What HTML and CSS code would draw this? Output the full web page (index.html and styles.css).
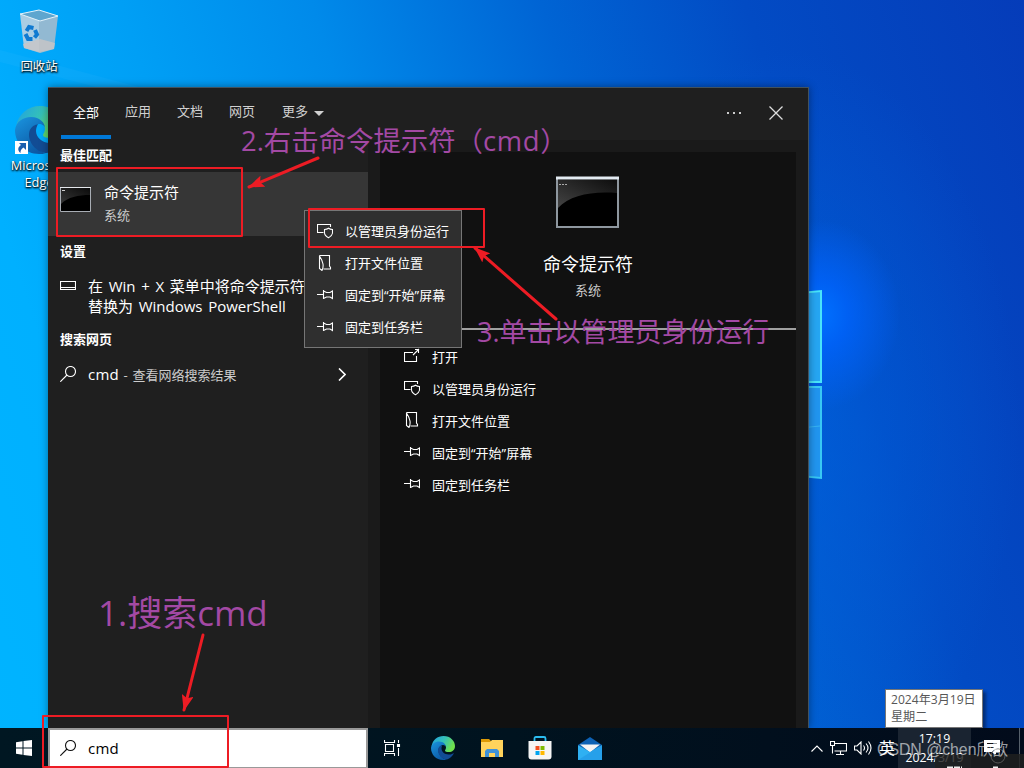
FILE: index.html
```html
<!DOCTYPE html>
<html lang="zh-CN">
<head>
  <meta charset="UTF-8">
  <title>搜索 cmd</title>
  <link rel="stylesheet" href="styles.css">
</head>
<body>
  <!-- 公用图标 -->
  <svg class="defs" width="0" height="0">
    <defs>
      <symbol id="i-shield" viewBox="0 0 16 16">
        <path d="M6.500 9.500H.5v-8h13v2.500" />
        <path d="M11.500 5.300c1.200.9 2.500 1.200 4 1.200v3.200c0 2.500-2.200 4-4 5-1.800-1-4-2.500-4-5V6.500c1.500 0 2.800-.3 4-1.200z" />
      </symbol>
      <symbol id="i-folder" viewBox="0 0 16 16">
        <path d="M2.500.5h10v10.500l1 1.500v1.500H6.500M2.500.5v13l2.500 2q1.500-3 1-6.500t-3.500-8" />
      </symbol>
      <symbol id="i-pin" viewBox="0 0 16 16">
        <path d="M0 7.500h6.500M6.500 3v9M6.500 4l3 1.500h3.500l2.500-1.500v7.500l-2.500-1.500H9.500l-3 1.500" />
      </symbol>
      <symbol id="i-open" viewBox="0 0 16 16">
        <path d="M9 4.500H.5v9h12V8M9 7l6-6M11 1.500h3.500V5" />
      </symbol>
      <symbol id="i-search" viewBox="0 0 16 16">
        <circle cx="10.500" cy="5.500" r="5" />
        <path d="M7 9L.3 15.700" />
      </symbol>
      <linearGradient id="edgeA" x1="0" y1="0" x2="1" y2=".4">
        <stop offset="0" stop-color="#1fa0e4" />
        <stop offset=".55" stop-color="#35c1b8" />
        <stop offset="1" stop-color="#6fe04c" />
      </linearGradient>
      <linearGradient id="edgeB" x1="0" y1="0" x2=".6" y2="1">
        <stop offset="0" stop-color="#1a95e0" />
        <stop offset="1" stop-color="#0c59a4" />
      </linearGradient>
      <symbol id="i-edge" viewBox="0 0 48 48">
        <path fill="url(#edgeA)" d="M1 21C3 8 13 0 25 0c14 0 23 10 23 20 0 8-6 12-12 12-5 0-8-1-8-3 0-1 2-3 2-6 0-5-5-9-12-9C10 14 4 17 1 21z" />
        <path fill="url(#edgeB)" d="M0 24c1-8 8-13 16-13 9 0 14 6 14 11 0-2-3-4-6-4-5 0-9 5-9 11 0 8 7 16 16 18-2 1-5 1-7 1C10 48 0 37 0 24z" />
        <path fill="#124c94" d="M23 18c-7 2-9 6-9 11 0 9 9 18 18 18 6-2 10-6 13-11 1-1 0-2-1-1-3 2-6 2-9 2-8 0-14-6-14-12 0-3 1-5 2-7z" />
      </symbol>
      <linearGradient id="conGloss" x1="0" y1="1" x2="1" y2="0">
        <stop offset="0" stop-color="#555" />
        <stop offset="1" stop-color="#111" />
      </linearGradient>
      <marker id="tip" viewBox="0 0 16 12" refX="15" refY="6" markerWidth="16" markerHeight="12" markerUnits="userSpaceOnUse" orient="auto">
        <path fill="#ed1c24" d="M0 0l16 6-16 6 3-6z" />
      </marker>
    </defs>
  </svg>

  <div class="desktop">
    <!-- 壁纸上的窗口标志 -->
    <svg class="wall-logo" width="40" height="210" viewBox="0 0 40 210">
      <path fill="#26a6f2" stroke="#48e4fa" stroke-width="2" d="M0 14l21-2v91H0z" />
      <path fill="#2195ef" stroke="#38c8f4" stroke-width="2" d="M0 108h21v91l-21-2z" />
      <path stroke="#37b4f3" d="M0 149l20-2" />
    </svg>
    <svg class="wall-ray" width="300" height="90" viewBox="0 0 300 90">
      <path d="M0 0l300 80v10L0 12z" fill="#fff" opacity=".03" />
    </svg>

    <!-- 桌面图标 -->
    <div class="shortcuts">
      <div class="shortcut">
        <svg width="40" height="44" viewBox="0 0 40 44">
          <path fill="#aacde3" d="M1 5l19 6v32L5 39z" />
          <path fill="#92b9d2" d="M39 7L20 11v32l15-3z" />
          <path fill="#5ea6cf" d="M1 5l19-4 19 6-18 5z" />
          <path fill="#c9c6c5" d="M4 35l17-5 15 4-1 6-14 4-16-5z" opacity=".8" />
          <path fill="none" stroke="#e3f2fa" d="M1 5l19-4 19 6-18 5z" />
          <path fill="none" stroke="#0f7ad1" stroke-width="4" d="M7.500 22l2.500-4 4.500 1M16 21l2 4.500-2.500 3M13.500 30H9l-2.500-5" />
        </svg>
        <span>回收站</span>
      </div>
      <div class="shortcut edge">
        <svg width="48" height="48"><use href="#i-edge" /></svg>
        <svg class="link-mark" width="13" height="13" viewBox="0 0 13 13">
          <path fill="#fff" d="M0 0h13v13H0z" />
          <path fill="#1b5fae" d="M4 2h7v7L8.500 6.500C6 8 5.500 9.500 5.500 12 2 9 3 6 6 4z" />
        </svg>
        <span>Microsoft<br>Edge</span>
      </div>
    </div>

    <!-- 搜索窗口 -->
    <div class="search-window">
      <div class="tabs">
        <div class="tab active">全部</div>
        <div class="tab">应用</div>
        <div class="tab">文档</div>
        <div class="tab">网页</div>
        <div class="tab more">更多<i class="caret"></i></div>
        <svg class="dots" width="16" height="4" viewBox="0 0 16 4">
          <path fill="#ccc" d="M1 1h2v2H1zM7 1h2v2H7zM13 1h2v2h-2z" />
        </svg>
        <svg class="close" width="14" height="14" viewBox="0 0 14 14">
          <path d="M.5.5l13 13M13.500.5l-13 13" />
        </svg>
      </div>
      <div class="content">
        <div class="results">
          <h2>最佳匹配</h2>
          <div class="best">
            <svg width="32" height="26" viewBox="0 0 32 26">
              <path fill="#000" stroke="#a8adb4" d="M.5.500h30v24H.5z" />
              <path fill="url(#conGloss)" d="M1 1h29v7C18 8 8 10 1 17z" opacity=".65" />
              <path stroke="#e5e8ec" d="M0 .5h31" />
              <path stroke="#ccc" d="M2 3.500h3" />
            </svg>
            <div>
              <div class="best-name">命令提示符</div>
              <div class="best-type">系统</div>
            </div>
          </div>
          <h2>设置</h2>
          <div class="setting">
            <svg class="line" width="16" height="10" viewBox="0 0 16 10">
              <path d="M.5.500h15v8H.5zM.5 6.500h15" />
            </svg>
            <div>在 Win + X 菜单中将命令提示符<br>替换为 Windows PowerShell</div>
          </div>
          <h2>搜索网页</h2>
          <div class="web">
            <svg class="line" width="16" height="16"><use href="#i-search" /></svg>
            <div class="web-text">cmd<small> - 查看网络搜索结果</small></div>
            <svg class="line go" width="8" height="13" viewBox="0 0 8 13"><path d="M1 .5l6 6-6 6" /></svg>
          </div>
        </div>
        <div class="preview">
          <div class="card">
            <div class="hero">
              <svg width="64" height="53" viewBox="0 0 64 53">
                <path fill="#000" stroke="#8e979f" stroke-width="2" d="M1 2h61v49H1z" />
                <path fill="url(#conGloss)" d="M2 4h59v13C36 15 14 19 2 32z" opacity=".8" />
                <path stroke="#e3ebf2" stroke-width="3" d="M0 2h63" />
                <path stroke="#aaa" stroke-dasharray="2 1" d="M3 8.500h8" />
              </svg>
              <div class="hero-name">命令提示符</div>
              <div class="hero-type">系统</div>
            </div>
            <div class="actions">
              <div class="action"><svg class="line" width="16" height="16"><use href="#i-open" /></svg>打开</div>
              <div class="action"><svg class="line" width="16" height="16"><use href="#i-shield" /></svg>以管理员身份运行</div>
              <div class="action"><svg class="line" width="16" height="16"><use href="#i-folder" /></svg>打开文件位置</div>
              <div class="action"><svg class="line" width="16" height="16"><use href="#i-pin" /></svg><span>固定到<q>开始</q>屏幕</span></div>
              <div class="action"><svg class="line" width="16" height="16"><use href="#i-pin" /></svg>固定到任务栏</div>
            </div>
          </div>
        </div>
      </div>
    </div>

    <!-- 右键菜单 -->
    <div class="menu">
      <div class="menu-item"><svg class="line" width="16" height="16"><use href="#i-shield" /></svg>以管理员身份运行</div>
      <div class="menu-item"><svg class="line" width="16" height="16"><use href="#i-folder" /></svg>打开文件位置</div>
      <div class="menu-item"><svg class="line" width="16" height="16"><use href="#i-pin" /></svg><span>固定到<q>开始</q>屏幕</span></div>
      <div class="menu-item"><svg class="line" width="16" height="16"><use href="#i-pin" /></svg>固定到任务栏</div>
    </div>

    <div class="tooltip">2024年3月19日<br>星期二</div>

    <!-- 任务栏 -->
    <div class="taskbar">
      <div class="start">
        <svg width="16" height="16" viewBox="0 0 16 16">
          <path fill="#fff" d="M0 2.200L6.500 1.300v6.200H0zM7.500 1.100L16 0v7.500H7.500zM0 8.500h6.500v6.200L0 13.800zM7.500 8.500H16V16l-8.500-1.100z" />
        </svg>
      </div>
      <div class="search-box">
        <svg class="line dark" width="16" height="16"><use href="#i-search" /></svg>
        <span>cmd</span>
      </div>
      <div class="apps">
        <svg class="line" width="17" height="16" viewBox="0 0 17 16">
          <path d="M.5 0v2.500h10V0M.5 16v-2.500h10V16M1.500 4.500h8v7h-8zM14.500 0v3M14.500 8v8" />
          <path fill="#fff" d="M13.500 4.500h2v2h-2z" />
        </svg>
        <svg width="24" height="24"><use href="#i-edge" /></svg>
        <svg width="22" height="19" viewBox="0 0 22 19">
          <path fill="#dd9a06" d="M0 0h8l2 2v3H0z" />
          <path fill="#ffd35c" d="M0 3h9l2-2h11v17H0z" />
          <path fill="#3f92d8" d="M4 18v-6l2-2h10l2 2v6h-4v-4H8v4z" />
        </svg>
        <svg width="24" height="24" viewBox="0 0 24 24">
          <path fill="none" stroke="#2bbdf0" stroke-width="1.800" d="M6.500 6V2.500q0-1.500 1.500-1.500h8q1.500 0 1.500 1.500V6" />
          <path fill="#f5f5f5" d="M.5 5h23v15.500q0 3-3 3h-17q-3 0-3-3z" />
          <path fill="#f25022" d="M7.500 10h4v4h-4z" /><path fill="#7fba00" d="M12.500 10h4v4h-4z" />
          <path fill="#00a4ef" d="M7.500 15h4v4h-4z" /><path fill="#ffb900" d="M12.500 15h4v4h-4z" />
        </svg>
        <svg width="24" height="23" viewBox="0 0 24 23">
          <path fill="#0d62b5" d="M0 8l12-8 12 8-12 8z" />
          <path fill="#f4f4f4" d="M2 7.500h20l-10 8z" />
          <path fill="#2fb0f2" d="M0 8l12 7 12-7v15H0z" />
          <path fill="#1d8fe0" d="M0 23L24 8v15z" opacity=".45" />
        </svg>
      </div>
      <div class="tray">
        <svg class="line" width="12" height="7" viewBox="0 0 12 7"><path d="M.5 6.500L6 1l5.500 5.500" /></svg>
        <svg class="line" width="17" height="14" viewBox="0 0 17 14">
          <path d="M5 2.500h11.500v7.500H4.500M10.500 10v3M6 13.500h8M.5.500h4v4h-4zM2.500 4.500v8" />
        </svg>
        <svg class="line" width="18" height="14" viewBox="0 0 18 14">
          <path d="M.5 5v4h2.500l4 4V1L3 5zM9.500 4.500q2 2.500 0 5M12 2.500q4 4.500 0 9M14.500 .5q5 6.500 0 13" />
        </svg>
        <span class="ime">英</span>
        <div class="clock">17:19<br>2024/3/19</div>
        <svg class="notice" width="18" height="17" viewBox="0 0 18 17">
          <path fill="#fff" d="M1 0h16v12h-4v4l-4-4H1z" />
          <path stroke="#111" d="M4 3.500h10M4 7.500h7" />
        </svg>
        <div class="peek"></div>
      </div>
    </div>

    <svg class="shade" width="89" height="14" viewBox="0 0 89 14">
      <path fill="#202020" opacity=".82" d="M0 0h89v14H0z" />
      <circle cx="63" cy="2" r="7" fill="none" stroke="#555" />
      <path stroke="#eee" stroke-width="2" stroke-dasharray="6 1" d="M12 13.500h15M58 13.500h5" />
    </svg>
    <div class="watermark">CSDN @chen欣歆</div>

    <!-- 步骤标注 -->
    <div class="note note-1">1.搜索cmd</div>
    <div class="note note-2">2.右击命令提示符（<span>cmd</span>）</div>
    <div class="note note-3">3.单击以管理员身份运行</div>
    <svg class="marks" width="1024" height="768" viewBox="0 0 1024 768">
      <rect x="43" y="716" width="185" height="51" />
      <rect x="57" y="168" width="185" height="68" />
      <rect x="309" y="209" width="175" height="38" />
      <path d="M203 635L184 710" marker-end="url(#tip)" />
      <path d="M318 158L249 187" marker-end="url(#tip)" />
      <path d="M556 319L475 248" marker-end="url(#tip)" />
    </svg>
  </div>
</body>
</html>
```

FILE: styles.css
```css
* {
  box-sizing: border-box;
}

body {
  margin: 0;
  font-family: "Open Sans", "Noto Sans CJK SC", sans-serif;
  font-size: 13px;
  color: #fff;
}

.defs {
  position: absolute;
}

.desktop {
  position: relative;
  width: 1024px;
  height: 768px;
  overflow: hidden;
  display: flex;
  flex-direction: column;
  justify-content: flex-end;
  background:
    radial-gradient(ellipse 80px 95px at 820px 315px, #0070ff 0%, rgba(0, 100, 255, 0.75) 35%, rgba(0, 90, 240, 0) 100%),
    radial-gradient(ellipse 230px 380px at 790px 430px, rgba(0, 96, 220, 0.7), rgba(0, 96, 220, 0) 100%),
    linear-gradient(72deg, #00b4ff 0%, #00b0ff 14%, #009ff5 29%, #008aea 44%, #0064d4 62%, #024bc4 78%, #053cb9 100%);
}

.wall-logo {
  position: absolute;
  left: 800px;
  top: 279px;
}

.wall-ray {
  position: absolute;
  left: 0;
  top: 50px;
}

/* 桌面图标 */
.shortcuts {
  position: absolute;
  left: 0;
  top: 9px;
  width: 78px;
  display: flex;
  flex-direction: column;
}

.shortcut {
  display: flex;
  flex-direction: column;
  align-items: center;
  height: 96px;
  text-align: center;
  font-size: 12.3px;
  line-height: 17px;
  text-shadow: 1px 1px 2px #000, 0 1px 2px #000;
}

.shortcut span {
  margin-top: 5px;
}

.shortcut.edge {
  position: relative;
  padding-top: 1px;
  font-size: 12.8px;
}

.shortcut.edge span {
  margin-top: 3px;
}

.link-mark {
  position: absolute;
  left: 15px;
  top: 36px;
}

/* 搜索窗口 */
.search-window {
  position: absolute;
  left: 48px;
  top: 87px;
  width: 761px;
  height: 641px;
  display: flex;
  flex-direction: column;
  background: #1f1f1f;
  border-top: 1px solid #42525e;
  border-right: 1px solid #42525e;
  box-shadow: 0 0 8px rgba(0, 0, 0, 0.4);
}

.tabs {
  display: flex;
  align-items: stretch;
  flex: 0 0 52px;
  padding: 0 25px 0 13px;
  color: #d0d0d0;
}

.tab {
  width: 50px;
  margin-right: 2px;
  text-align: center;
  line-height: 47px;
  white-space: nowrap;
}

.tab.active {
  height: 51px;
  color: #fff;
  line-height: 49px;
  border-bottom: 4px solid #0078d7;
}

.tab.more {
  width: 68px;
}

.caret {
  display: inline-block;
  margin-left: 6px;
  vertical-align: 0;
  border: 5px solid transparent;
  border-top-color: #d0d0d0;
  border-bottom: 0;
}

.dots {
  margin: 23px 27px 0 auto;
}

.close {
  margin-top: 18px;
  stroke: #ddd;
  stroke-width: 1.3;
}

.content {
  display: flex;
  flex: 1;
}

.results {
  width: 320px;
}

h2 {
  margin: 0;
  padding-left: 12px;
  height: 32px;
  font-size: 13px;
  font-weight: 700;
  line-height: 31px;
}

.best {
  display: flex;
  align-items: flex-start;
  gap: 12px;
  height: 64px;
  padding: 7px 0 0 12px;
  background: #363636;
}

.best svg {
  margin-top: 8px;
}

.best-name {
  padding-top: 1px;
  font-size: 15px;
  line-height: 24px;
}

.best-type {
  color: #ccc;
  line-height: 23px;
}

.setting {
  display: flex;
  gap: 12px;
  height: 56px;
  padding: 8px 0 0 12px;
  font-size: 15px;
  line-height: 20px;
  word-spacing: 1.8px;
  white-space: nowrap;
}

.setting svg {
  margin-top: 5px;
}

.web {
  display: flex;
  align-items: center;
  gap: 12px;
  height: 36px;
  padding: 0 22px 0 12px;
  font-size: 15px;
  letter-spacing: 0.2px;
}

.web small {
  font-size: 13px;
  letter-spacing: 0;
  word-spacing: 1.3px;
  color: #ccc;
}

.web .go {
  margin-left: auto;
  stroke-width: 1.6;
}

.preview {
  flex: 1;
  padding: 12px 12px 0;
  background: #1a1a1a;
}

.card {
  height: 100%;
  background: #111;
}

.hero {
  display: flex;
  flex-direction: column;
  align-items: center;
  height: 178px;
  padding-top: 24px;
  border-bottom: 2px solid #a0a0a0;
}

.hero-name {
  margin-top: 20px;
  font-size: 18px;
  line-height: 30px;
}

.hero-type {
  color: #ccc;
  line-height: 22px;
}

.actions {
  padding: 10px 0 0 24px;
}

.action {
  display: flex;
  align-items: center;
  gap: 12px;
  height: 32px;
}

.action svg {
  margin-bottom: 1px;
}

q {
  quotes: none;
}

q::before {
  content: "“";
  font-family: "Open Sans", sans-serif;
}

q::after {
  content: "”";
  font-family: "Open Sans", sans-serif;
}

.line {
  flex: none;
  fill: none;
  stroke: #fff;
  stroke-width: 1.1;
}

.line.dark {
  stroke: #111;
}

/* 右键菜单 */
.menu {
  position: absolute;
  left: 304px;
  top: 210px;
  width: 158px;
  height: 138px;
  padding: 3px 12px;
  background: #2f2f2f;
  border: 1px solid #767676;
}

.menu-item {
  display: flex;
  align-items: center;
  gap: 12px;
  height: 32px;
  white-space: nowrap;
}

.menu-item svg {
  margin-top: 2px;
}

.tooltip {
  position: absolute;
  left: 885px;
  top: 689px;
  width: 98px;
  height: 39px;
  padding: 1px 5px;
  background: #fff;
  border: 1px solid #767676;
  box-shadow: 3px 3px 3px rgba(0, 0, 0, 0.4);
  color: #575757;
  font-size: 12.1px;
  line-height: 17px;
  white-space: nowrap;
}

/* 任务栏 */
.taskbar {
  position: relative;
  display: flex;
  height: 40px;
  background: linear-gradient(90deg, #001722, #00131f 50%, #020b1b);
}

.start {
  display: flex;
  align-items: center;
  justify-content: center;
  width: 48px;
}

.search-box {
  display: flex;
  align-items: center;
  gap: 12px;
  width: 320px;
  padding: 0 0 2px 10px;
  background: #fff;
  border: 2px solid #999;
  border-bottom-width: 1px;
  color: #000;
  font-size: 15px;
  letter-spacing: 0.2px;
}

.apps {
  display: flex;
  align-items: center;
  gap: 26px;
  padding-left: 16px;
}

.apps svg:nth-child(2) {
  margin-left: 4px;
}

.apps svg:nth-child(4) {
  margin-left: -1px;
}

.tray {
  display: flex;
  align-items: center;
  gap: 7px;
  margin-left: auto;
}

.ime {
  margin-top: -2px;
  font-size: 16px;
}

.clock {
  width: 73px;
  height: 40px;
  margin-left: -4px;
  padding-top: 1px;
  background: #1a2431;
  font-size: 12.3px;
  line-height: 19px;
  text-align: center;
}

.notice {
  margin: 0 11px 0 5px;
}

.peek {
  width: 5px;
  height: 40px;
  border-left: 1px solid #56606b;
}

.shade {
  position: absolute;
  left: 935px;
  top: 754px;
  overflow: visible;
}

.watermark {
  position: absolute;
  left: 877px;
  top: 739px;
  font-family: "Liberation Sans", "Noto Sans CJK SC", sans-serif;
  font-size: 15.8px;
  line-height: 22px;
  color: rgba(255, 255, 255, 0.6);
  white-space: nowrap;
}

/* 标注 */
.note {
  position: absolute;
  color: #a349a4;
  font-size: 27px;
  line-height: 36px;
  font-weight: 375;
  white-space: nowrap;
}

.note-1 {
  left: 98px;
  top: 590px;
  font-size: 35px;
  line-height: 46px;
}

.note-2 {
  left: 241px;
  top: 123px;
  font-size: 27.4px;
}

.note-2 span {
  letter-spacing: 0.7px;
}

.note-3 {
  left: 477px;
  top: 314px;
}

.marks {
  position: absolute;
  left: 0;
  top: 0;
  fill: none;
  stroke: #ed1c24;
  stroke-width: 2;
}

.marks > path {
  stroke-width: 3;
  stroke-linecap: round;
}

.marks rect {
  stroke-linejoin: round;
}

marker path {
  stroke: none;
}
```
